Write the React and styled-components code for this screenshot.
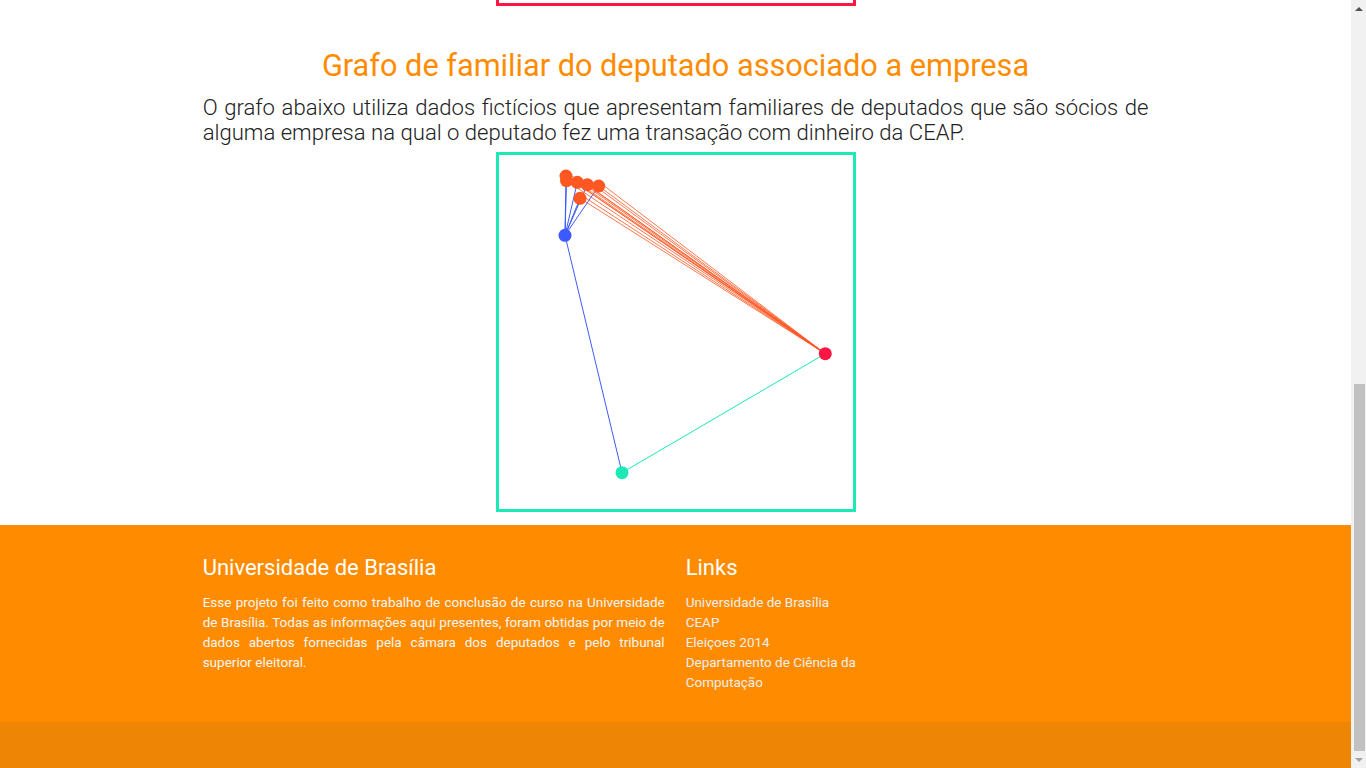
import styled, {createGlobalStyle} from "styled-components";

const GlobalStyle = createGlobalStyle`
  body {
    margin: 0;
    font-family: Roboto, "Liberation Sans", sans-serif;
    background: #fff;
    color: rgba(0, 0, 0, 0.87);
  }
`;

const Viewport = styled.div`
  display: flex;
  height: 100vh;
  overflow: hidden;
`;

const Page = styled.div`
  flex: 1;
  min-width: 0;
`;

const ScrollTrack = styled.div`
  width: 15px;
  flex-shrink: 0;
  background: #f1f1f1;
  display: flex;
  flex-direction: column;
  align-items: center;
`;

const ScrollArrow = styled.div`
  height: 17px;
  width: 15px;
  display: flex;
  align-items: center;
  justify-content: center;
  &::before {
    content: "";
    border-left: 4px solid transparent;
    border-right: 4px solid transparent;
    border-bottom: ${props => props.down ? "none" : "4px solid #505050"};
    border-top: ${props => props.down ? "4px solid #a3a3a3" : "none"};
  }
`;

const ScrollRail = styled.div`
  flex: 1;
  display: flex;
  flex-direction: column;
  padding-top: 367px;
`;

const ScrollThumb = styled.div`
  flex: 1;
  width: 11px;
  margin-left: 2px;
  background: #c1c1c1;
`;

const Main = styled.main`
  display: flex;
  flex-direction: column;
  align-items: center;
`;

const Container = styled.div`
  width: 70%;
  margin: 0 auto;
`;

const GraphFrame = styled.div`
  box-sizing: border-box;
  width: 360px;
  height: ${props => props.height || "360px"};
  border: 3px solid ${props => props.color};
  border-top: ${props => props.cut ? "none" : ""};
  margin: ${props => props.margin || "0 auto"};
  background: #fff;
  svg {
    display: block;
  }
`;

const Title = styled.h4`
  font-size: 30.7px;
  font-weight: 400;
  line-height: 35px;
  color: #ff8c00;
  text-align: center;
  margin: 42px 0 12px;
`;

const Description = styled.p`
  font-size: 22.1px;
  font-weight: 300;
  line-height: 25px;
  margin: 0 0 7px;
  text-align: justify;
  color: #222;
`;

const Footer = styled.footer`
  background: #ff8c00;
  margin-top: 13px;
  color: #fff;
`;

const FooterRow = styled.div`
  display: grid;
  grid-template-columns: 462px 220px;
  column-gap: 21px;
  padding: 30px 0 30px;
`;

const FooterHeading = styled.h5`
  font-size: 22px;
  font-weight: 400;
  line-height: 25px;
  margin: 0 0 12px;
  color: #fff;
`;

const FooterText = styled.p`
  font-size: 13.5px;
  line-height: 20px;
  margin: 0;
  text-align: justify;
  color: #f5f5f5;
`;

const LinkList = styled.ul`
  list-style: none;
  margin: 0;
  padding: 0;
`;

const LinkItem = styled.li`
  font-size: 13.5px;
  line-height: 20px;
  a {
    color: #eeeeee;
    text-decoration: none;
  }
`;

const Copyright = styled.div`
  height: 46px;
  background: rgba(51, 51, 51, 0.08);
`;

const family = [
  {x: 67, y: 21},
  {x: 67.5, y: 25.7},
  {x: 78.3, y: 27.3},
  {x: 88.3, y: 29.7},
  {x: 99.7, y: 31},
  {x: 81, y: 43.3},
];
const deputado = {x: 66, y: 80.3};
const empresa = {x: 326.3, y: 198.7};
const transacao = {x: 123, y: 317.7};

const FamilyGraph = () => (
  <svg width="354" height="354" viewBox="0 0 354 354">
    {family.map((n, i) => (
      <line key={"d" + i} x1={deputado.x} y1={deputado.y} x2={n.x} y2={n.y} stroke="#3d5afe" strokeWidth="1"/>
    ))}
    {family.map((n, i) => (
      <g key={"e" + i}>
        <line x1={n.x} y1={n.y} x2={empresa.x} y2={empresa.y} stroke="#ff5722" strokeWidth="0.8"/>
        <line x1={n.x + 3} y1={n.y - 2} x2={empresa.x} y2={empresa.y} stroke="#ff5722" strokeWidth="0.8"/>
      </g>
    ))}
    <line x1={deputado.x} y1={deputado.y} x2={transacao.x} y2={transacao.y} stroke="#3d5afe" strokeWidth="1"/>
    <line x1={transacao.x} y1={transacao.y} x2={empresa.x} y2={empresa.y} stroke="#1de9b6" strokeWidth="1"/>
    {family.map((n, i) => (
      <circle key={"n" + i} cx={n.x} cy={n.y} r="6.5" fill="#ff5722"/>
    ))}
    <circle cx={deputado.x} cy={deputado.y} r="6.5" fill="#3d5afe"/>
    <circle cx={empresa.x} cy={empresa.y} r="6.5" fill="#ff1744"/>
    <circle cx={transacao.x} cy={transacao.y} r="6.5" fill="#1de9b6"/>
  </svg>
);

const links = [
  "Universidade de Brasília",
  "CEAP",
  "Eleiçoes 2014",
  "Departamento de Ciência da Computação",
];

const App = () => {
  return (
    <Viewport>
      <GlobalStyle/>
      <Page>
        <Main>
          <GraphFrame color="#ff1744" height="6px" cut margin="0"/>
          <Container>
            <Title>Grafo de familiar do deputado associado a empresa</Title>
            <Description>
              O grafo abaixo utiliza dados fictícios que apresentam familiares de deputados que são sócios de alguma empresa na qual o deputado fez uma transação com dinheiro da CEAP.
            </Description>
            <GraphFrame color="#1de9b6">
              <FamilyGraph/>
            </GraphFrame>
          </Container>
        </Main>
        <Footer>
          <Container>
            <FooterRow>
              <div>
                <FooterHeading>Universidade de Brasília</FooterHeading>
                <FooterText>
                  Esse projeto foi feito como trabalho de conclusão de curso na Universidade de Brasília. Todas as informações aqui presentes, foram obtidas por meio de dados abertos fornecidas pela câmara dos deputados e pelo tribunal superior eleitoral.
                </FooterText>
              </div>
              <div>
                <FooterHeading>Links</FooterHeading>
                <LinkList>
                  {links.map(label => (
                    <LinkItem key={label}><a href="#">{label}</a></LinkItem>
                  ))}
                </LinkList>
              </div>
            </FooterRow>
          </Container>
          <Copyright/>
        </Footer>
      </Page>
      <ScrollTrack>
        <ScrollArrow/>
        <ScrollRail>
          <ScrollThumb/>
        </ScrollRail>
        <ScrollArrow down/>
      </ScrollTrack>
    </Viewport>
  );
};

export default App;
